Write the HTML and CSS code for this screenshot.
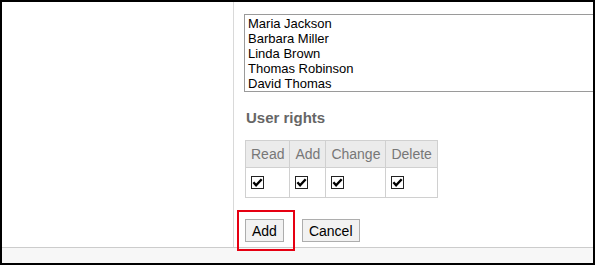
FILE: index.html
```html
<!DOCTYPE html>
<html>
<head>
<meta charset="utf-8">
<link rel="stylesheet" href="styles.css">
</head>
<body>
<div class="frame">
  <div class="main">
    <div class="side"></div>
    <div class="content">
      <div class="listbox">
        <div class="opt">Maria Jackson</div>
        <div class="opt">Barbara Miller</div>
        <div class="opt">Linda Brown</div>
        <div class="opt">Thomas Robinson</div>
        <div class="opt">David Thomas</div>
      </div>
      <h3 class="heading">User rights</h3>
      <table class="rights">
        <tr><th>Read</th><th>Add</th><th>Change</th><th>Delete</th></tr>
        <tr>
          <td><svg class="cb" viewBox="0 0 13 13"><rect x="0.5" y="0.5" width="12" height="12" fill="#fff" stroke="#222"/><path d="M2.4 6.2 L5.1 9.2 L10.7 3.2" fill="none" stroke="#000" stroke-width="2.4"/></svg></td>
          <td><svg class="cb" viewBox="0 0 13 13"><rect x="0.5" y="0.5" width="12" height="12" fill="#fff" stroke="#222"/><path d="M2.4 6.2 L5.1 9.2 L10.7 3.2" fill="none" stroke="#000" stroke-width="2.4"/></svg></td>
          <td><svg class="cb" viewBox="0 0 13 13"><rect x="0.5" y="0.5" width="12" height="12" fill="#fff" stroke="#222"/><path d="M2.4 6.2 L5.1 9.2 L10.7 3.2" fill="none" stroke="#000" stroke-width="2.4"/></svg></td>
          <td><svg class="cb" viewBox="0 0 13 13"><rect x="0.5" y="0.5" width="12" height="12" fill="#fff" stroke="#222"/><path d="M2.4 6.2 L5.1 9.2 L10.7 3.2" fill="none" stroke="#000" stroke-width="2.4"/></svg></td>
        </tr>
      </table>
      <div class="buttons">
        <span class="btn-wrap">
          <button class="btn">Add</button>
          <span class="highlight"></span>
        </span>
        <button class="btn">Cancel</button>
      </div>
    </div>
  </div>
  <div class="footer"></div>
</div>
</body>
</html>
```

FILE: styles.css
```css
html, body {
  margin: 0;
  padding: 0;
  background: #fff;
}
body {
  font-family: "Liberation Sans", Arial, sans-serif;
}
.frame {
  width: 595px;
  height: 265px;
  box-sizing: border-box;
  border: 2px solid #000;
  display: flex;
  flex-direction: column;
  overflow: hidden;
}
.main {
  height: 245px;
  display: flex;
  flex: none;
}
.side {
  width: 231px;
  border-right: 1px solid #d9d9d9;
  flex: none;
}
.content {
  flex: 1;
  min-width: 0;
  padding-left: 10px;
  position: relative;
}
.listbox {
  margin-top: 12px;
  width: 380px;
  border: 1px solid #9a9a9a;
  padding: 1px 3px 0 3px;
  font-size: 13px;
  line-height: 15px;
  color: #000;
}
.opt {
  height: 15px;
  white-space: nowrap;
}
.heading {
  margin: 17px 0 0 2px;
  font-size: 15px;
  line-height: 17px;
  font-weight: bold;
  color: #666;
}
.rights {
  margin: 14px 0 0 1px;
  border-collapse: collapse;
  font-size: 14px;
}
.rights th {
  background: #ebebeb;
  color: #777;
  font-weight: normal;
  border: 1px solid #d0d0d0;
  padding: 5px 5px 5px 5px;
  line-height: 16px;
  text-align: left;
}
.rights td {
  border: 1px solid #d0d0d0;
  padding: 0 5px;
  height: 29px;
  vertical-align: middle;
}
.cb {
  display: block;
  width: 13px;
  height: 13px;
}
.buttons {
  margin: 21px 0 0 1px;
  display: flex;
  gap: 18px;
}
.btn-wrap {
  position: relative;
  display: inline-block;
}
.btn {
  font-family: "Liberation Sans", Arial, sans-serif;
  font-size: 14px;
  height: 23px;
  padding: 0 6px;
  margin: 0;
  border: 1px solid #adadad;
  background: #f2f2f2;
  color: #000;
  border-radius: 0;
  display: block;
}
.highlight {
  position: absolute;
  left: -8px;
  top: -9px;
  width: 58px;
  height: 41px;
  box-sizing: border-box;
  border: 2px solid #e60012;
}
.footer {
  flex: 1;
  border-top: 1px solid #cccccc;
  background: #f7f7f7;
}
```
